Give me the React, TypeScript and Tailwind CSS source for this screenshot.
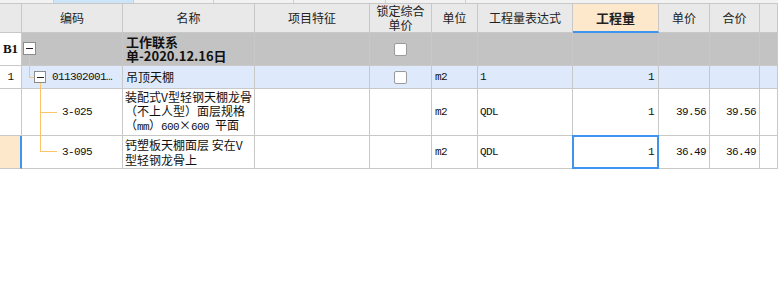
import React from 'react'

const cols = 'grid grid-cols-[22px_101px_132px_115px_62px_46px_95px_86px_51px_50px_1fr]'
const cell = 'border-r border-b border-[#c8c8c8] flex items-center min-w-0'
const mono = "font-['Liberation_Mono',monospace] text-[11px] tracking-[-0.6px]"
const line = 'absolute bg-[#fdc46a]'

function TreeBox({ className }: { className: string }) {
  return (
    <span className={`absolute flex items-center justify-center bg-white border border-[#8c8c8c] ${className}`}>
      <span className="block w-[7px] h-px bg-[#222]" />
    </span>
  )
}

function Check() {
  return <span className="block w-[13px] h-[13px] bg-white border border-[#9a9a9a] rounded-[2px]" />
}

export default function App() {
  return (
    <div className="w-[778px] h-[295px] bg-white overflow-hidden font-['Noto_Sans_CJK_SC',sans-serif] text-[12px] text-[#111]">
      {/* tab strip */}
      <div className="flex h-[3px] bg-[#f2f2f2]">
        <div className="w-[54px] border-r border-[#d0d0d0]" />
        <div className="w-[80px] bg-[#cce5f9] border-r border-[#d0d0d0]" />
        <div className="w-[80px] border-r border-[#d0d0d0]" />
        <div className="w-[80px] border-r border-[#d0d0d0]" />
        <div className="w-[92px] border-r border-[#d0d0d0]" />
        <div className="w-[80px] border-r border-[#d0d0d0]" />
      </div>

      {/* header */}
      <div className={`${cols} h-[30px] bg-[#e9e9e9] border-t border-[#c8c8c8] text-[#222]`}>
        <div className={cell} />
        <div className={`${cell} justify-center`}>编码</div>
        <div className={`${cell} justify-center`}>名称</div>
        <div className={`${cell} justify-center`}>项目特征</div>
        <div className={`${cell} justify-center text-center leading-[14px]`}>锁定综合<br />单价</div>
        <div className={`${cell} justify-center`}>单位</div>
        <div className={`${cell} justify-center`}>工程量表达式</div>
        <div className={`${cell} justify-center bg-[#fde8cc] font-bold text-[13px] border-b-2 border-b-[#3d95ef]`}>工程量</div>
        <div className={`${cell} justify-center`}>单价</div>
        <div className={`${cell} justify-center`}>合价</div>
        <div className={cell} />
      </div>

      {/* B1 */}
      <div className={`${cols} h-[33px] bg-[#c3c3c3]`}>
        <div className={`${cell} justify-center bg-white font-['Liberation_Serif',serif] font-bold text-[13px]`}>B1</div>
        <div className={`${cell} relative`}>
          <TreeBox className="left-[1px] top-[9px] w-[13px] h-[13px]" />
          <span className={`${line} left-[7px] top-[22px] bottom-[-1px] w-px`} />
        </div>
        <div className={`${cell} pl-[3px] font-bold text-[13px] leading-[14px]`}>
          <span className="whitespace-nowrap">工作联系<br />单-2020.12.16日</span>
        </div>
        <div className={cell} />
        <div className={`${cell} justify-center`}><Check /></div>
        <div className={cell} />
        <div className={cell} />
        <div className={cell} />
        <div className={cell} />
        <div className={cell} />
        <div className={cell} />
      </div>

      {/* row 1 */}
      <div className={`${cols} h-[23px] bg-[#deeafc]`}>
        <div className={`${cell} justify-center bg-white ${mono}`}>1</div>
        <div className={`${cell} relative`}>
          <span className={`${line} left-[7px] top-0 h-[12px] w-px`} />
          <span className={`${line} left-[7px] top-[11px] w-[5px] h-px`} />
          <TreeBox className="left-[12px] top-[5px] w-[12px] h-[12px]" />
          <span className={`${line} left-[18px] top-[17px] bottom-[-1px] w-px`} />
          <span className={`absolute left-[30px] ${mono} whitespace-nowrap`}>011302001…</span>
        </div>
        <div className={`${cell} pl-[3px]`}>吊顶天棚</div>
        <div className={cell} />
        <div className={`${cell} justify-center`}><Check /></div>
        <div className={`${cell} pl-[3px] ${mono}`}>m2</div>
        <div className={`${cell} pl-[2px] ${mono}`}>1</div>
        <div className={`${cell} justify-end pr-[4px] ${mono}`}>1</div>
        <div className={cell} />
        <div className={cell} />
        <div className={cell} />
      </div>

      {/* 3-025 */}
      <div className={`${cols} h-[47px] bg-white`}>
        <div className={cell} />
        <div className={`${cell} relative`}>
          <span className={`${line} left-[18px] top-0 bottom-[-1px] w-px`} />
          <span className={`${line} left-[18px] top-[23px] w-[17px] h-px`} />
          <span className={`absolute left-[40px] ${mono}`}>3-025</span>
        </div>
        <div className={`${cell} pl-[2px] leading-[14px]`}>
          <span className="whitespace-nowrap">
            装配式V型轻钢天棚龙骨<br />
            （不上人型）面层规格<br />
            （<span className={mono}>mm</span>）<span className={mono}>600</span>×<span className={mono}>600 </span>平面
          </span>
        </div>
        <div className={cell} />
        <div className={cell} />
        <div className={`${cell} pl-[3px] ${mono}`}>m2</div>
        <div className={`${cell} pl-[2px] ${mono}`}>QDL</div>
        <div className={`${cell} justify-end pr-[4px] ${mono}`}>1</div>
        <div className={`${cell} justify-end pr-[3px] ${mono}`}>39.56</div>
        <div className={`${cell} justify-end pr-[3px] ${mono}`}>39.56</div>
        <div className={cell} />
      </div>

      {/* 3-095 */}
      <div className={`${cols} h-[33px] bg-white`}>
        <div className={`${cell} bg-[#fde8cc] border-r-2 border-r-[#3d95ef]`} />
        <div className={`${cell} relative`}>
          <span className={`${line} left-[18px] top-0 h-[16px] w-px`} />
          <span className={`${line} left-[18px] top-[15px] w-[17px] h-px`} />
          <span className={`absolute left-[40px] ${mono}`}>3-095</span>
        </div>
        <div className={`${cell} pl-[2px] leading-[15px]`}>
          <span className="whitespace-nowrap">钙塑板天棚面层 安在V<br />型轻钢龙骨上</span>
        </div>
        <div className={cell} />
        <div className={cell} />
        <div className={`${cell} pl-[3px] ${mono}`}>m2</div>
        <div className={`${cell} pl-[2px] ${mono}`}>QDL</div>
        <div className={`${cell} relative justify-end pr-[4px] ${mono}`}>
          1
          <span className="absolute left-[-1px] top-[-1px] right-[-1px] bottom-[-1px] border-2 border-[#3d95ef]" />
        </div>
        <div className={`${cell} justify-end pr-[3px] ${mono}`}>36.49</div>
        <div className={`${cell} justify-end pr-[3px] ${mono}`}>36.49</div>
        <div className={cell} />
      </div>
    </div>
  )
}
